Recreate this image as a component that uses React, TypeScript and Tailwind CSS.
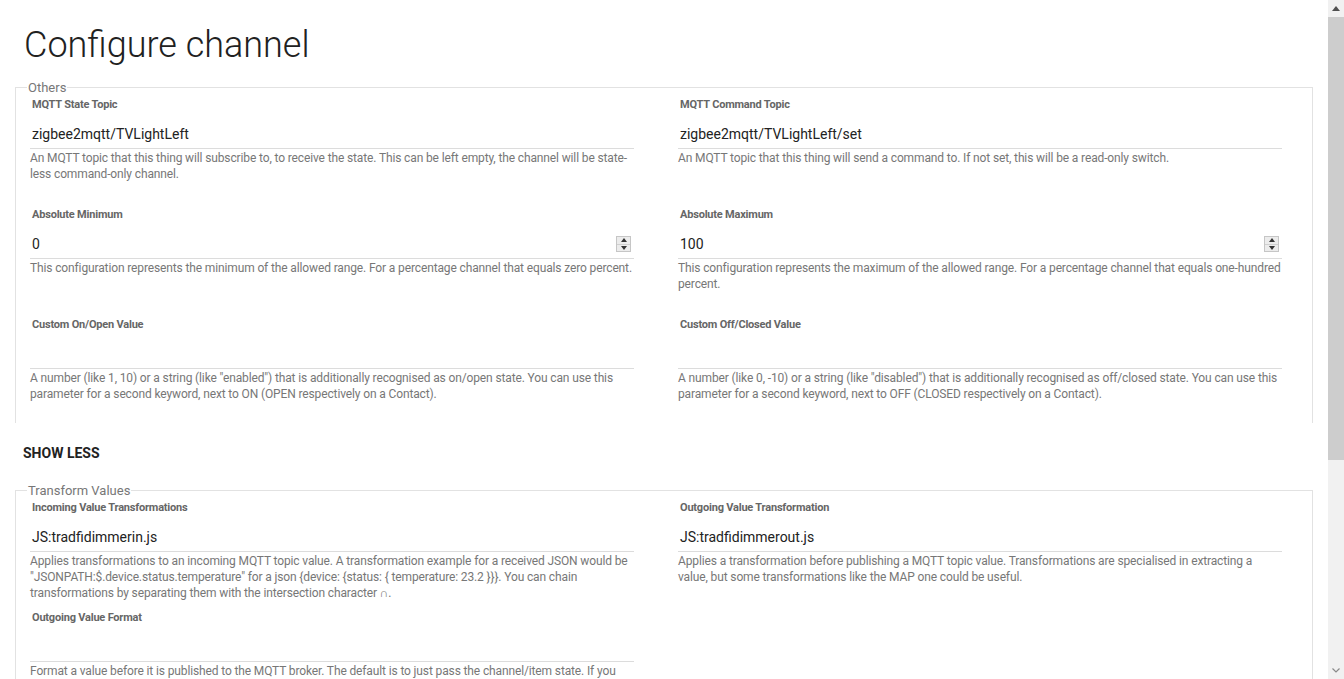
import React from 'react'

type Field = {
  label: string
  value?: string
  number?: boolean
  desc: string
}

const others: Field[] = [
  {
    label: 'MQTT State Topic',
    value: 'zigbee2mqtt/TVLightLeft',
    desc: 'An MQTT topic that this thing will subscribe to, to receive the state. This can be left empty, the channel will be state-less command-only channel.',
  },
  {
    label: 'MQTT Command Topic',
    value: 'zigbee2mqtt/TVLightLeft/set',
    desc: 'An MQTT topic that this thing will send a command to. If not set, this will be a read-only switch.',
  },
  {
    label: 'Absolute Minimum',
    value: '0',
    number: true,
    desc: 'This configuration represents the minimum of the allowed range. For a percentage channel that equals zero percent.',
  },
  {
    label: 'Absolute Maximum',
    value: '100',
    number: true,
    desc: 'This configuration represents the maximum of the allowed range. For a percentage channel that equals one-hundred percent.',
  },
  {
    label: 'Custom On/Open Value',
    desc: 'A number (like 1, 10) or a string (like "enabled") that is additionally recognised as on/open state. You can use this parameter for a second keyword, next to ON (OPEN respectively on a Contact).',
  },
  {
    label: 'Custom Off/Closed Value',
    desc: 'A number (like 0, -10) or a string (like "disabled") that is additionally recognised as off/closed state. You can use this parameter for a second keyword, next to OFF (CLOSED respectively on a Contact).',
  },
]

const transforms: Field[] = [
  {
    label: 'Incoming Value Transformations',
    value: 'JS:tradfidimmerin.js',
    desc: 'Applies transformations to an incoming MQTT topic value. A transformation example for a received JSON would be "JSONPATH:$.device.status.temperature" for a json {device: {status: { temperature: 23.2 }}}. You can chain transformations by separating them with the intersection character \u2229.',
  },
  {
    label: 'Outgoing Value Transformation',
    value: 'JS:tradfidimmerout.js',
    desc: 'Applies a transformation before publishing a MQTT topic value. Transformations are specialised in extracting a value, but some transformations like the MAP one could be useful.',
  },
  {
    label: 'Outgoing Value Format',
    desc: 'Format a value before it is published to the MQTT broker. The default is to just pass the channel/item state. If you want to apply a prefix, say "MYCOLOR,", you would use "MYCOLOR,%s". Currently only "%s" is supported.',
  },
]

function Spinner() {
  return (
    <div className="flex h-[16px] w-[15px] flex-col border border-[#c6c6c6] bg-[#ececec]">
      <div className="flex flex-1 items-center justify-center border-b border-[#d0d0d0]">
        <div className="h-0 w-0 border-x-[3px] border-b-[4px] border-x-transparent border-b-[#333]" />
      </div>
      <div className="flex flex-1 items-center justify-center">
        <div className="h-0 w-0 border-x-[3px] border-t-[4px] border-x-transparent border-t-[#333]" />
      </div>
    </div>
  )
}

function FieldBlock({ field }: { field: Field }) {
  return (
    <div className="h-[110px] pl-[14px] pr-[30px]">
      <div className="pl-[2px] text-[11px] leading-[14px] font-bold tracking-[-0.2px] text-[#666]">{field.label}</div>
      <div className="mt-[4px] flex h-[33px] items-center border-b border-[#dcdcdc] pt-[4px] pl-[2px] pr-[3px]">
        <span className="flex-1 text-[14px] leading-[16px] text-[#222]">{field.value ?? ''}</span>
        {field.number && <Spinner />}
      </div>
      <p className="mt-[1px] text-[12px] leading-[16px] tracking-[-0.13px] text-[#777]">{field.desc}</p>
    </div>
  )
}

function Group({ title, fields }: { title: string; fields: Field[] }) {
  return (
    <fieldset className="border border-b-0 border-[#e2e2e2]">
      <legend className="ml-[11px] px-[1px] text-[13px] leading-[15px] text-[#777]">{title}</legend>
      <div className="mt-[3px] grid grid-cols-2">
        {fields.map((f) => (
          <FieldBlock key={f.label} field={f} />
        ))}
      </div>
    </fieldset>
  )
}

export default function App() {
  return (
    <div className="flex h-screen w-full overflow-hidden bg-white" style={{ fontFamily: 'Roboto, "Noto Sans", sans-serif' }}>
      <div className="flex-1 overflow-hidden px-[15px]">
        <h1 className="ml-[9px] mt-[24px] text-[36px] leading-[43px] font-light text-[#212121]">Configure channel</h1>
        <div className="mt-[13px] h-[343px] overflow-hidden">
          <Group title="Others" fields={others} />
        </div>
        <button className="ml-[8px] mt-[22px] block text-[14px] leading-[16px] font-bold text-[#222]">SHOW LESS</button>
        <div className="mt-[22px]">
          <Group title="Transform Values" fields={transforms} />
        </div>
      </div>
      {/* scrollbar */}
      <div className="flex w-[16px] flex-col bg-[#f1f1f1]">
        <div className="flex h-[17px] items-center justify-center">
          <svg width="8" height="5" viewBox="0 0 8 5">
            <path d="M0 5L4 0L8 5Z" fill="#505050" />
          </svg>
        </div>
        <div className="h-[443px] bg-[#cdcdcd]" />
        <div className="flex-1" />
        <div className="flex h-[17px] items-center justify-center">
          <svg width="8" height="5" viewBox="0 0 8 5">
            <path d="M0.5 0.5L4 4L7.5 0.5" fill="none" stroke="#8a8a8a" strokeWidth="1.2" />
          </svg>
        </div>
      </div>
    </div>
  )
}
